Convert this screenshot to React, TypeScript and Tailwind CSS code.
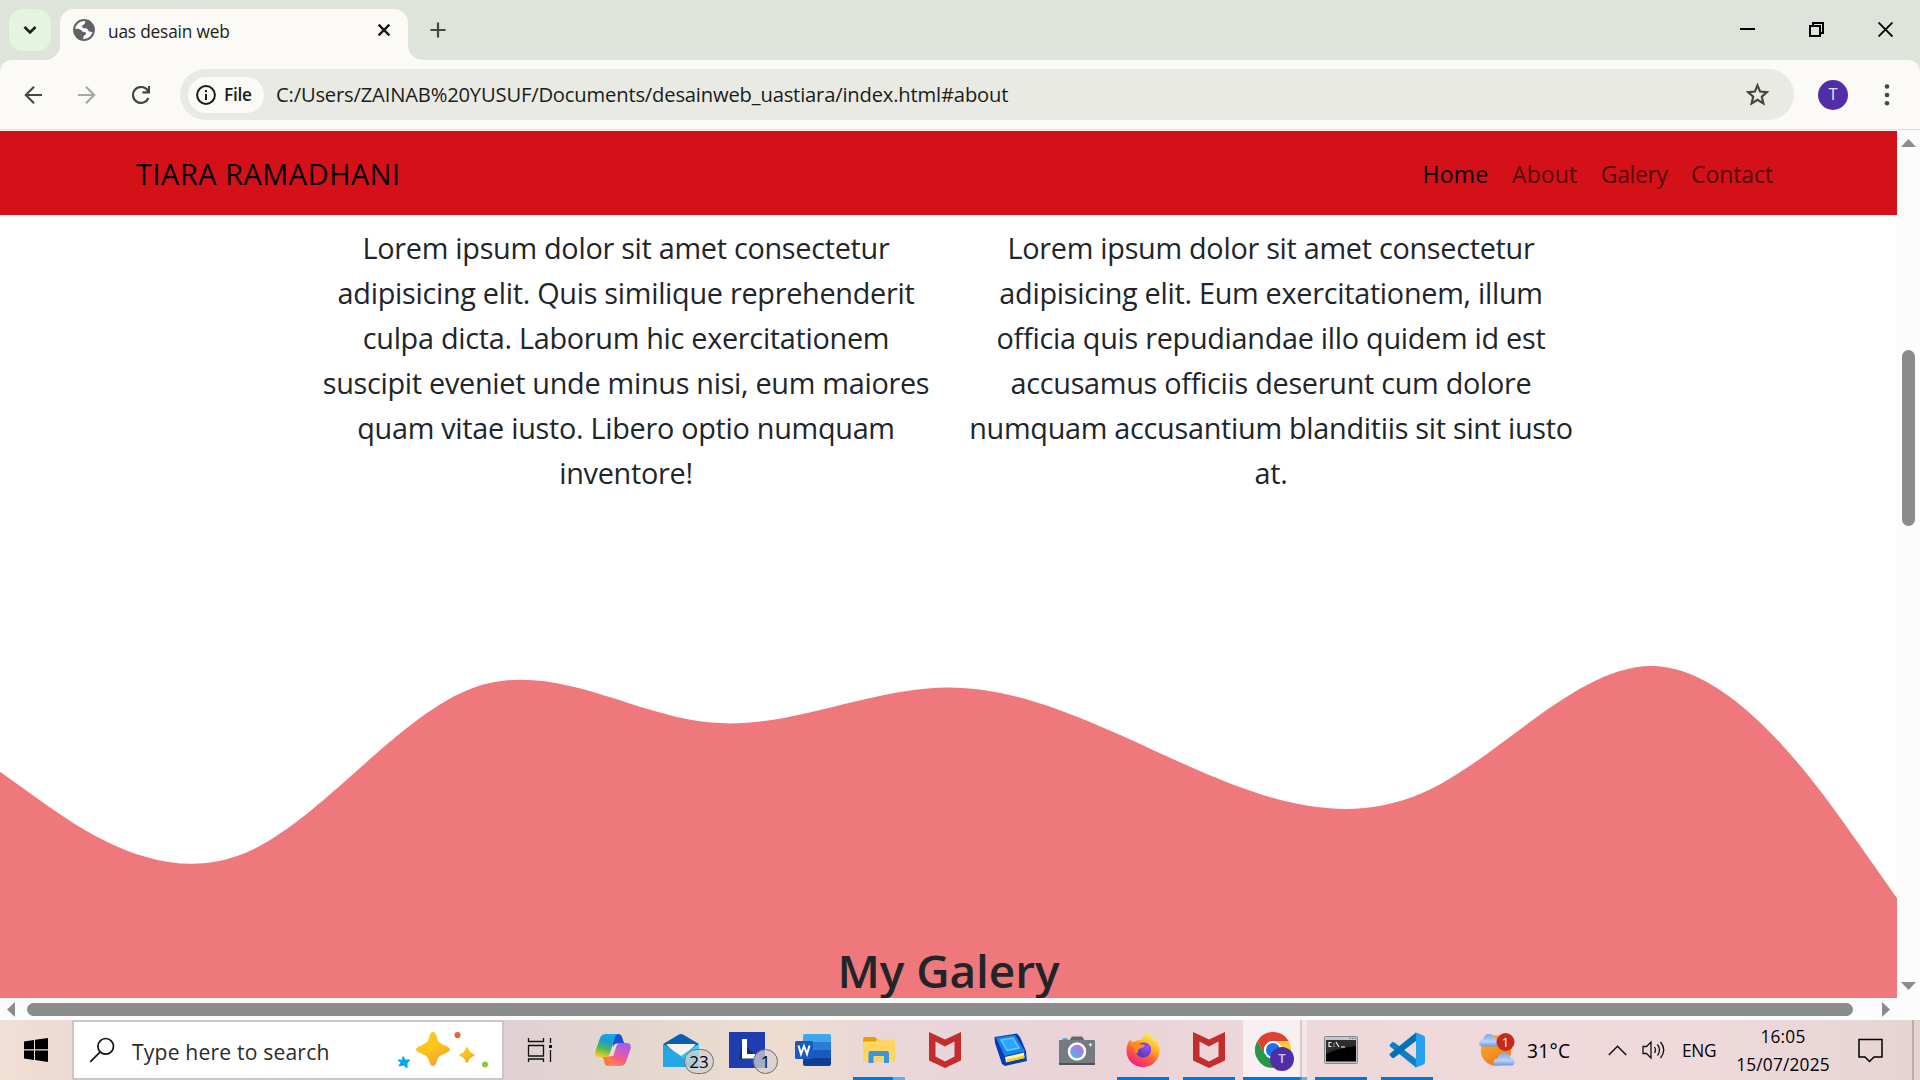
import type { ReactNode } from "react";

function GlobeIcon() {
  return (
    <svg className="size-[22px]" viewBox="0 0 22 22">
      <circle cx="11" cy="11" r="9.900" fill="#fbfaf6" stroke="#5f6368" strokeWidth="2" />
      <path d="M13 1 C11.500 3 12.500 4.500 11 5.500 C9 6 8.500 7.500 10 9 C12 9.500 13 8.500 14.500 10 C15 12.500 17 13 20.800 13 A10 10 0 0 0 13 1Z" fill="#5f6368" />
      <path d="M1.200 10 C4 9.500 7 10 8.500 11.500 C9.500 13.500 12 12.500 13 14 C13.500 16 11 16 10.500 17.500 C10.500 19 10 20 9.500 21 A10 10 0 0 1 1.200 10Z" fill="#5f6368" />
    </svg>
  );
}

function TabStrip() {
  return (
    <header className="flex h-[60px] items-end bg-[#dee4d9]">
      <button className="mb-[9px] ml-[9px] flex size-[42px] items-center justify-center rounded-[14px] bg-[#e6f3e1]">
        <svg className="size-[14px]" viewBox="0 0 14 14" fill="none" stroke="#1b1c19" strokeWidth="2.6">
          <path d="M1.5 4 L7 9.4 L12.5 4" />
        </svg>
      </button>
      <div className="relative ml-[9px] flex h-[51px] w-[348px] items-center rounded-t-[14px] bg-[#fbfaf6] pr-[17px] pb-[9px] pl-[13px]">
        <svg className="absolute bottom-0 -left-[15px] size-[15px]" viewBox="0 0 15 15" fill="#fbfaf6">
          <path d="M15 0 A15 15 0 0 1 0 15 H15Z" />
        </svg>
        <svg className="absolute -right-[15px] bottom-0 size-[15px]" viewBox="0 0 15 15" fill="#fbfaf6">
          <path d="M0 0 A15 15 0 0 0 15 15 H0Z" />
        </svg>
        <GlobeIcon />
        <span className="mt-[4px] ml-[13px] text-[17.3px] tracking-[-0.18px] text-[#1b1c19]">uas desain web</span>
        <svg className="ml-auto size-[14px]" viewBox="0 0 14 14" stroke="#1b1c19" strokeWidth="2.4">
          <path d="M1.6 1.6 L12.4 12.4 M12.4 1.6 L1.6 12.4" />
        </svg>
      </div>
      <svg className="mb-[22px] ml-[22px] size-4" viewBox="0 0 16 16" stroke="#434840" strokeWidth="2.2">
        <path d="M8 0.5 V15.5 M0.5 8 H15.5" />
      </svg>
      <div className="mb-[23px] ml-auto flex items-center gap-[54px] pr-[27px]">
        <svg className="size-[15px]" viewBox="0 0 15 15" fill="#000" shapeRendering="crispEdges">
          <rect x="0" y="6" width="15" height="2" />
        </svg>
        <svg className="size-[15px]" viewBox="0 0 15 15" fill="none" stroke="#000" strokeWidth="2" shapeRendering="crispEdges">
          <path d="M1 4 H11 V14 H1Z M4 4 V1 H14 V11 H11" />
        </svg>
        <svg className="size-[15px]" viewBox="0 0 15 15" stroke="#000" strokeWidth="1.9">
          <path d="M0.5 0.5 L14.5 14.5 M14.5 0.5 L0.5 14.5" />
        </svg>
      </div>
    </header>
  );
}

function Toolbar() {
  return (
    <div className="h-[71px] bg-[#dee4d9]">
      <div className="flex h-[70px] items-center rounded-t-[12px] border-b border-[#dfe0db] bg-[#fbfaf6]">
        <svg className="ml-[24px] size-[18px]" viewBox="0 0 18 18" fill="none" stroke="#434840" strokeWidth="2.1">
          <path d="M18 9 H1.5 M10 0.8 L1.8 9 L10 17.2" />
        </svg>
        <svg className="ml-[36px] size-[18px]" viewBox="0 0 18 18" fill="none" stroke="#a5a7a1" strokeWidth="2.1">
          <path d="M0 9 H16.5 M8 0.8 L16.2 9 L8 17.2" />
        </svg>
        <svg className="ml-[36px] size-[18px]" viewBox="0 0 18 18" fill="none" stroke="#434840" strokeWidth="2.2">
          <path d="M16.4 12 A8 8 0 1 1 15 3.6 L16.6 5.4 M17 0 V6.4 H10.4" />
        </svg>
        <div className="ml-[30px] flex h-[51px] w-[1614px] items-center rounded-full bg-[#e8eae3] pr-[25px] pl-[8px]">
          <div className="flex h-[36px] w-[76px] items-center rounded-full bg-[#fbfaf6] pl-[8px]">
            <svg className="size-5" viewBox="0 0 20 20" fill="none" stroke="#1b1c19" strokeWidth="2">
              <circle cx="10" cy="10" r="8.9" />
              <path d="M10 9 V15 M10 5 V7.2" />
            </svg>
            <span className="ml-[8px] text-[17.3px] font-semibold tracking-[-0.28px] text-[#1b1c19]">File</span>
          </div>
          <span className="ml-[12px] text-[20.2px] tracking-[-0.18px] text-[#1b1c19]">
            C:/Users/ZAINAB%20YUSUF/Documents/desainweb_uastiara/index.html#about
          </span>
          <svg className="ml-auto size-[23px]" viewBox="0 0 22 22" fill="none" stroke="#434840" strokeWidth="2.1">
            <path d="M11 2.2 L13.5 8.2 L20 8.8 L15.1 13 L16.6 19.5 L11 16 L5.4 19.5 L6.9 13 L2 8.8 L8.5 8.2Z" />
          </svg>
        </div>
        <div className="ml-[24px] flex size-[30px] items-center justify-center rounded-full bg-[#512da8] font-[Roboto] text-[16px] text-[#e4dcf5]">
          T
        </div>
        <svg className="ml-[36px] h-[24px] w-[6px]" viewBox="0 0 6 24" fill="#434840">
          <circle cx="3" cy="3.5" r="2.3" />
          <circle cx="3" cy="12" r="2.3" />
          <circle cx="3" cy="20.3" r="2.3" />
        </svg>
      </div>
      <div className="h-px bg-[#f7f7f5]" />
    </div>
  );
}

function SiteNav() {
  return (
    <nav className="flex h-[84px] items-center justify-between bg-[#d41119] pr-[124px] pl-[136px]">
      <a className="pt-[2px] text-[28.8px] tracking-[0.6px] text-black">TIARA RAMADHANI</a>
      <div className="flex gap-[23.5px] pt-[3px] text-[23px] text-[#550709]">
        <a className="tracking-[0.28px] text-black">Home</a>
        <a className="tracking-[0.1px]">About</a>
        <a className="tracking-[-0.4px]">Galery</a>
        <a className="tracking-[-0.1px]">Contact</a>
      </div>
    </nav>
  );
}

function About() {
  return (
    <section className="grid h-[346px] grid-cols-[645px_645px] justify-center pt-[10px] text-center text-[28.8px] leading-[45px] tracking-[-0.28px] whitespace-nowrap text-[#212529]">
      <p>
        Lorem ipsum dolor sit amet consectetur
        <br />
        adipisicing elit. Quis similique reprehenderit
        <br />
        culpa dicta. Laborum hic exercitationem
        <br />
        suscipit eveniet unde minus nisi, eum maiores
        <br />
        quam vitae iusto. Libero optio numquam
        <br />
        inventore!
      </p>
      <p>
        Lorem ipsum dolor sit amet consectetur
        <br />
        adipisicing elit. Eum exercitationem, illum
        <br />
        officia quis repudiandae illo quidem id est
        <br />
        accusamus officiis deserunt cum dolore
        <br />
        numquam accusantium blanditiis sit sint iusto
        <br />
        at.
      </p>
    </section>
  );
}

/* Control heights of the wave; consecutive ones are 180 units apart. */
const WAVE = [160, 288, 32, 160, 64, 160, 224, 0, 256];

function wavePath() {
  const step = 180;
  let d = `M0 ${WAVE[0]} L${step / 6} ${(5 * WAVE[0] + WAVE[1]) / 6}`;
  for (let i = 1; i < WAVE.length; i++) {
    const a = WAVE[i - 1];
    const b = WAVE[i];
    const c = WAVE[i + 1] ?? b;
    const last = i === WAVE.length - 1;
    const endX = last ? (i - 1 / 6) * step : i * step;
    const endY = last ? (a + 5 * b) / 6 : (a + 4 * b + c) / 6;
    d += ` C${(i - 2 / 3) * step} ${(2 * a + b) / 3} ${(i - 1 / 3) * step} ${(a + 2 * b) / 3} ${endX} ${endY}`;
  }
  return `${d} L1440 ${WAVE[WAVE.length - 1]} V320 H0Z`;
}

function Page() {
  return (
    <main className="h-[867px] w-[1897px] overflow-hidden bg-white">
      <SiteNav />
      <About />
      <svg className="block h-[421.6px] w-[1897px]" viewBox="0 0 1440 320" fill="#ee787b">
        <path d={wavePath()} />
      </svg>
      <section className="-mt-[41px] h-[120px] bg-[#ee787b] text-center">
        <h2 className="text-[46px] leading-[57.6px] font-semibold tracking-[-0.1px] text-[#212529]">My Galery</h2>
      </section>
    </main>
  );
}

function VerticalScrollbar() {
  return (
    <div className="flex h-[867px] w-[23px] flex-col items-center bg-[#fcfcfc] pt-[8px]">
      <svg className="h-[8px] w-[15px]" viewBox="0 0 15 8" fill="#8b8b8b">
        <path d="M0 8 L7.5 0 L15 8Z" />
      </svg>
      <div className="mt-[203px] h-[176px] w-[13px] rounded-full bg-[#8b8b8b]" />
      <svg className="mt-[456px] h-[8px] w-[15px]" viewBox="0 0 15 8" fill="#8b8b8b">
        <path d="M0 0 L7.5 8 L15 0Z" />
      </svg>
    </div>
  );
}

function HorizontalScrollbar() {
  return (
    <div className="flex h-[22px] items-center bg-[#fcfcfc] pl-[7px]">
      <svg className="h-[15px] w-[8px]" viewBox="0 0 8 15" fill="#8b8b8b">
        <path d="M8 0 L0 7.5 L8 15Z" />
      </svg>
      <div className="ml-[12px] h-[13px] w-[1826px] rounded-full bg-[#8b8b8b]" />
      <svg className="ml-[29px] h-[15px] w-[8px]" viewBox="0 0 8 15" fill="#8b8b8b">
        <path d="M0 0 L8 7.5 L0 15Z" />
      </svg>
    </div>
  );
}

function Slot({ children, open = false }: { children: ReactNode; open?: boolean }) {
  return (
    <div className="flex h-[60px] w-[66px] flex-col items-center">
      <div className="flex h-[57px] items-center pt-[3px]">{children}</div>
      {open && <div className="h-[3px] w-[52px] bg-[#0078d7]" />}
    </div>
  );
}

function Search() {
  return (
    <div className="flex h-[60px] w-[432px] items-center border-2 border-[#c8c8c8] bg-white pl-[15px]">
      <svg className="size-[26px]" viewBox="0 0 26 26" fill="none" stroke="#111" strokeWidth="1.7">
        <circle cx="16.7" cy="9.3" r="7.8" />
        <path d="M11.2 14.8 L1.2 24.8" />
      </svg>
      <span className="mt-[3px] ml-[17px] text-[21.1px] tracking-[0.18px] text-[#2b2b2b]">Type here to search</span>
      <svg className="mr-[14px] ml-auto h-[40px] w-[92px]" viewBox="0 0 92 40">
        <defs>
          <linearGradient id="spark" x1="0" y1="0" x2="0.5" y2="1">
            <stop offset="0" stopColor="#ffc814" />
            <stop offset="0.55" stopColor="#fdc41c" />
            <stop offset="1" stopColor="#f0a52c" />
          </linearGradient>
        </defs>
        <path
          d="M37 2 Q39.5 2 40.5 6 C42 12 43 13 49 15.500 Q54 17.500 54 19.500 Q54 21.500 49 23.500 C43 26 42 27 40.500 32 Q39.500 36 37 36 Q34.500 36 33.500 32 C32 27 31 26 25 23.500 Q20 21.500 20 19.500 Q20 17.500 25 15.500 C31 13 32 12 33.500 6 Q34.500 2 37 2Z"
          fill="url(#spark)"
        />
        <path
          d="M71 17 Q72 17 73 20 Q73.800 22.300 76.500 23.500 Q79 24.500 79 25 Q79 25.800 76.500 26.700 Q73.800 27.900 73 30 Q72 33 71 33 Q70 33 69 30 Q68.200 27.900 65.500 26.700 Q63 25.800 63 25 Q63 24.500 65.500 23.500 Q68.200 22.300 69 20 Q70 17 71 17Z"
          fill="url(#spark)"
        />
        <path
          d="M7 26.500 L9 30 L14 30 L11 33 L11 38 L7.500 35 L3 36 L5 32.500 L2 30 L6.500 30.200Z"
          fill="#00a8f0"
          stroke="#00a8f0"
          strokeLinejoin="round"
        />
        <circle cx="61.500" cy="5" r="3.100" fill="#f2652a" />
        <circle cx="89" cy="34.500" r="3" fill="#8ac640" />
      </svg>
    </div>
  );
}

function TaskViewIcon() {
  return (
    <svg className="size-[26px]" viewBox="0 0 26 26" fill="none" stroke="#111" strokeWidth="1.300">
      <path d="M1.500 1 V4.500 H16.500 V1 M1.500 8.500 H16.500 V19 H1.500Z M1.500 25 V22 H16.500 V25 M23.500 1 V6 M23.500 13 V25" />
      <rect x="22" y="8" width="3" height="3" fill="#111" stroke="none" />
    </svg>
  );
}

function CopilotIcon() {
  return (
    <svg className="size-[36px]" viewBox="0 0 36 36">
      <defs>
        <linearGradient id="copL" x1="0.600" y1="0" x2="0.300" y2="1">
          <stop offset="0" stopColor="#12a6ee" />
          <stop offset="0.350" stopColor="#1f9cc8" />
          <stop offset="0.650" stopColor="#52b857" />
          <stop offset="1" stopColor="#f4cc1c" />
        </linearGradient>
        <linearGradient id="copR" x1="0.700" y1="0" x2="0.300" y2="1">
          <stop offset="0" stopColor="#a35bf0" />
          <stop offset="0.400" stopColor="#d55bc0" />
          <stop offset="0.700" stopColor="#f8607c" />
          <stop offset="1" stopColor="#fb8a55" />
        </linearGradient>
      </defs>
      <path d="M16 2 H23 Q26 2 27 5 L28.500 9.500 Q29 11.500 32 11.500 H22 Q19 11.500 18 15Z" fill="#1a4fd6" />
      <path d="M20 34 H13 Q10.500 34 9.500 31 L8.500 27 Q8 24.500 4 24.500 H14 Q17 24.500 18 21Z" fill="#fb7a3c" />
      <path d="M11 2 H24 Q21 2 20 5.500 L15 21 Q14 25 10 25 H4.500 Q-1 25 0.500 19 L5 6 Q6.500 2 11 2Z" fill="url(#copL)" />
      <path d="M26 11 H31.500 Q37 11 35.500 17 L31 30 Q29.500 34 25 34 H11.500 Q14.500 34 15.500 30.500 L21 15 Q22 11 26 11Z" fill="url(#copR)" />
      <path d="M20 12 H23 Q21.500 13 21 15 L18.300 24 H14 Q15 22 15.500 20Z" fill="#e6dbd6" />
    </svg>
  );
}

function Count({ text, className }: { text: string; className: string }) {
  return (
    <span
      className={`absolute flex h-[25px] items-center justify-center rounded-full border border-[#6f6f6f] bg-[#d3d0d0]/75 text-[17px] font-medium text-black ${className}`}
    >
      {text}
    </span>
  );
}

function MailIcon() {
  return (
    <div className="relative">
      <svg className="h-[36px] w-[36px]" viewBox="0 0 36 36">
        <path d="M0 12 L16 2.500 Q18 1.300 20 2.500 L36 12 L18 25Z" fill="#0b5fae" />
        <path d="M3 12.500 H33 L18 26Z" fill="#f4f3f2" />
        <path d="M0 12 L18 24 L36 12 V35 H0Z" fill="#26a6e4" />
        <path d="M36 12 V35 H33 L11 19.500 L18 24Z" fill="#3cc8f4" />
        <path d="M4 12 H32 L18 23.500Z" fill="#f4f3f2" />
      </svg>
      <Count text="23" className="-right-[15px] -bottom-[6px] w-[30px]" />
    </div>
  );
}

function LIcon() {
  return (
    <div className="relative">
      <svg className="size-[36px]" viewBox="0 0 36 36">
        <rect width="36" height="36" fill="#1f3db0" />
        <path d="M13 10 L10 27 H24 L25 22Z" fill="#0c3556" />
        <path d="M13 7 H18 V22 H26 V26.500 H13Z" fill="#fff" />
      </svg>
      <Count text="1" className="-right-[13px] -bottom-[6px] w-[25px]" />
    </div>
  );
}

function WordIcon() {
  return (
    <svg className="size-[36px]" viewBox="0 0 36 36">
      <path d="M10 2 H34 Q36 2 36 4 V10 H8 V4 Q8 2 10 2Z" fill="#41a5ee" />
      <rect x="8" y="10" width="28" height="8" fill="#2b7cd3" />
      <rect x="8" y="18" width="28" height="8" fill="#185abd" />
      <path d="M8 26 H36 V32 Q36 34 34 34 H10 Q8 34 8 32Z" fill="#103f91" />
      <rect x="0" y="9" width="18" height="18" rx="1.500" fill="#185abd" />
      <path d="M3.500 13.500 L6 22 L9 14 L12 22 L14.500 13.500" fill="none" stroke="#fff" strokeWidth="2" />
    </svg>
  );
}

function ExplorerIcon() {
  return (
    <svg className="size-[34px]" viewBox="0 0 34 34">
      <path d="M1 6 Q1 4 3 4 H13 L16.500 7.500 V10 H1Z" fill="#e2a100" />
      <path d="M1 8.500 H13 L16 6.500 H31 Q33 6.500 33 8.500 V27 Q33 29 31 29 H3 Q1 29 1 27Z" fill="#ffd45f" />
      <path d="M6.500 30 V20 Q6.500 18 8.500 18 H25 Q27 18 27 20 V30 H22 V23 H11.500 V30Z" fill="#3796dc" />
    </svg>
  );
}

function McAfeeIcon() {
  return (
    <svg className="h-[36px] w-[32px]" viewBox="0 0 32 36">
      <path
        fillRule="evenodd"
        d="M0 0 L16 7.500 L32 0 V28.500 L16 36 L0 28.500Z M6.500 9.500 V24.500 L16 29.500 L25.500 24.500 V9.500 L16 14.500Z"
        fill="#c22d2d"
      />
    </svg>
  );
}

function BookIcon() {
  return (
    <svg className="size-[36px]" viewBox="0 0 36 36">
      <path d="M1.500 5 L24 1.500 L27 5 L33 19 L33.500 25 L34 29 L12 34 L9 32 L2 11Z" fill="#0b3cae" />
      <path d="M12 25 L31 20.500 L31.500 26 L13 30.500Z" fill="#fff2a8" />
      <path d="M14 27.500 L31 23.500 L31.500 26 L14 30Z" fill="#f2d21c" />
      <path d="M3 5.500 L22 3 L32 19.500 L11.500 24Z" fill="#1585ea" />
      <path d="M8 8 L20 6 L26 16 L14 18.500Z" fill="#2ba6fa" stroke="#67c8ff" strokeWidth="1.500" strokeLinejoin="round" />
    </svg>
  );
}

function CameraIcon() {
  return (
    <svg className="size-[36px]" viewBox="0 0 36 36">
      <defs>
        <linearGradient id="lens" x1="0.800" y1="0" x2="0.200" y2="1">
          <stop offset="0.200" stopColor="#b07ae0" />
          <stop offset="1" stopColor="#48b8ee" />
        </linearGradient>
      </defs>
      <path d="M3 9 V8 Q3 6 5.500 6 Q9 6 9 8 V9Z" fill="#35aae6" />
      <path d="M10 9 L13 4.500 H23 L26 9Z" fill="#62686d" />
      <rect x="0" y="8" width="36" height="25" rx="1" fill="#757b80" />
      <rect x="0" y="31" width="36" height="2" fill="#4e5256" />
      <circle cx="18" cy="19.500" r="9.300" fill="#fff" />
      <circle cx="18" cy="19.500" r="6.800" fill="url(#lens)" />
      <path d="M31.500 11 V14.400 M29.800 12.700 H33.200" stroke="#e8e8e8" strokeWidth="1.200" />
    </svg>
  );
}

function FirefoxIcon() {
  return (
    <svg className="size-[36px]" viewBox="0 0 36 36">
      <defs>
        <linearGradient id="fox" x1="0.800" y1="0" x2="0.250" y2="1">
          <stop offset="0.050" stopColor="#fff04a" />
          <stop offset="0.350" stopColor="#ffb52a" />
          <stop offset="0.620" stopColor="#ff6038" />
          <stop offset="1" stopColor="#f4178c" />
        </linearGradient>
        <radialGradient id="foxCore" cx="0.700" cy="0.300" r="0.800">
          <stop offset="0" stopColor="#9550f5" />
          <stop offset="1" stopColor="#5336b8" />
        </radialGradient>
      </defs>
      <path
        d="M22 0.500 C26 3 28 6 28.500 9 L31 8 C34 12 35 16 34.500 20 C33.500 29 26.500 35 18 35 C8.500 35 1.500 28 1.500 19 C1.500 14 3 10 5.500 7 L6.500 10.500 Q8 9.500 10.500 9.500 Q12 7.500 17 7.500 Q18.500 3 22 0.500Z"
        fill="url(#fox)"
      />
      <path d="M12 13.500 C15 9.500 24 9 26 16 C26.500 22 22.500 25.500 18 25.500 C13.500 25.500 11 22 11 18Z" fill="url(#foxCore)" />
      <path d="M4.500 12 Q8 9 12 10 Q13.500 12 20 13 Q19 16 15 16.500 Q12.500 17 13 21 Q8 20 8 15Z" fill="#ff8a22" />
    </svg>
  );
}

function ChromeIcon() {
  return (
    <div className="relative mr-[5px] h-[36px] w-[36px]">
      <svg className="size-[36px]" viewBox="0 0 36 36">
        <path d="M18 18 V9 H33.600 A18 18 0 0 1 18 36Z" fill="#fcc934" />
        <path d="M2.400 9 L10.200 22.500 L18 27 V36 A18 18 0 0 1 2.400 9Z" fill="#279648" />
        <path d="M18 36 L25.800 22.500 L18 18 L10.200 22.500 Q13 27 18 27Z" fill="#279648" />
        <path d="M2.400 9 L10.200 22.500 A9 9 0 0 1 18 9 H33.600 A18 18 0 0 0 2.400 9Z" fill="#e0402f" />
        <circle cx="18" cy="18" r="9" fill="#fff" />
        <circle cx="18" cy="18" r="7" fill="#1a73e8" />
      </svg>
      <span className="absolute top-[15px] left-[15px] flex size-[24px] items-center justify-center rounded-full bg-[#512da8] text-[13px] font-semibold text-[#d3c5ee]">
        T
      </span>
    </div>
  );
}

function TerminalIcon() {
  return (
    <svg className="h-[28px] w-[34px]" viewBox="0 0 34 28">
      <rect x="0.500" y="0.500" width="33" height="27" rx="1" fill="#c3c8cc" stroke="#84898e" />
      <rect x="2" y="4" width="30" height="21.500" fill="#000" />
      <path d="M2 4 H32 V10 Q14 12 2 18Z" fill="#2e2e2e" />
      <path d="M7.500 6.500 H5 V10.500 H7.500 M10 7.500 V8.500 M10 9.800 V10.800 M12 6 L15 11 M17 11 H21" stroke="#eee" strokeWidth="1.200" fill="none" />
      <path d="M25 2.200 H26.500 M28 2.200 H29.500 M31 2.200 H32" stroke="#54606a" />
    </svg>
  );
}

function CodeIcon() {
  return (
    <svg className="size-[36px]" viewBox="0 0 36 36">
      <path d="M1 12.500 L3 10.300 Q4 9.500 5.500 10.500 L27 27 V35.500 L1 14.500 Q0 13.500 1 12.500Z" fill="#0f7fc6" />
      <path d="M1 23.500 L3 25.700 Q4 26.500 5.500 25.500 L27 9 V0.500 L1 21.500 Q0 22.500 1 23.500Z" fill="#0073b7" />
      <path d="M26 0 L34.500 3.500 Q36 4.300 36 6 V30 Q36 31.700 34.500 32.500 L26 36 Q27 35 27 33.500 V2.500 Q27 1 26 0Z" fill="#24a2f0" />
    </svg>
  );
}

function WeatherIcon() {
  return (
    <svg className="h-[36px] w-[38px]" viewBox="0 0 38 36">
      <defs>
        <linearGradient id="sun" x1="0" y1="0" x2="0.500" y2="1">
          <stop offset="0" stopColor="#f0b92a" />
          <stop offset="1" stopColor="#f27b1c" />
        </linearGradient>
        <linearGradient id="cloud" x1="0" y1="0" x2="0" y2="1">
          <stop offset="0" stopColor="#7ba6e6" />
          <stop offset="0.600" stopColor="#bcd2f4" />
          <stop offset="1" stopColor="#6f98dc" />
        </linearGradient>
      </defs>
      <circle cx="18" cy="18.500" r="15.200" fill="url(#sun)" />
      <path d="M5 14.500 Q1 14.500 1 11 Q1 8 5 7.500 Q6 2 11 2 Q16 2 17 6.500 Q22 7 22 11 Q22 14.500 18 14.500Z" fill="url(#cloud)" />
      <path d="M19 33.500 Q15.500 33.500 15.500 30 Q15.500 27 19.500 26.500 Q21 20.500 26 20.500 Q31 20.500 32 25.500 Q36.500 26 36.500 30 Q36.500 33.500 33 33.500Z" fill="url(#cloud)" />
      <circle cx="27.500" cy="10" r="9" fill="#c42b1c" />
      <text x="27.500" y="14.600" textAnchor="middle" fontSize="13" fill="#fff">
        1
      </text>
    </svg>
  );
}

function Taskbar() {
  return (
    <footer className="flex h-[60px] bg-[linear-gradient(90deg,#f1e0d4_0px,#eddad4_70px,#dfd1d4_510px,#e4d7cf_640px,#eeddd0_780px,#ead6d8_880px,#e9d3d8_1100px,#eed8da_1300px,#efd9db_1700px,#e6d4d3_1920px)]">
      <div className="flex w-[72px] items-center justify-center">
        <svg className="size-[24px]" viewBox="0 0 24 24" fill="#000">
          <path d="M0 3.400 L10 2 V11.300 H0Z M11 1.800 L24 0 V11.300 H11Z M0 12.400 H10 V21.900 L0 20.500Z M11 12.400 H24 V24 L11 22.100Z" />
        </svg>
      </div>
      <Search />
      <div className="ml-[3px] flex">
        <Slot><TaskViewIcon /></Slot>
        <div className="w-[7px]" />
        <Slot><CopilotIcon /></Slot>
        <div className="w-[2px]" />
        <Slot><MailIcon /></Slot>
        <Slot><LIcon /></Slot>
        <Slot><WordIcon /></Slot>
        <div className="flex w-[66px] flex-col items-center">
          <div className="flex h-[57px] items-center pt-[3px]"><ExplorerIcon /></div>
          <div className="flex h-[3px] w-[52px]">
            <div className="w-[40px] bg-[#0078d7]" />
            <div className="w-[12px] bg-[#66aee7]" />
          </div>
        </div>
        <Slot><McAfeeIcon /></Slot>
        <Slot><BookIcon /></Slot>
        <Slot><CameraIcon /></Slot>
        <Slot open><FirefoxIcon /></Slot>
        <Slot open><McAfeeIcon /></Slot>
        <div className="flex h-[60px] w-[66px]">
          <div className="ml-px flex w-[57px] flex-col items-center bg-[#f8eff0]">
            <div className="flex h-[57px] items-center pt-[3px] pl-[8px]"><ChromeIcon /></div>
            <div className="h-[3px] w-full bg-[#0078d7]" />
          </div>
          <div className="flex w-[2px] flex-col justify-end bg-[#d8c6c9]">
            <div className="h-[3px] bg-[#4a86b8]" />
          </div>
          <div className="flex w-[5px] flex-col justify-end bg-[#f5e6e8]">
            <div className="h-[3px] bg-[#66aee7]" />
          </div>
        </div>
        <Slot open><TerminalIcon /></Slot>
        <Slot open><CodeIcon /></Slot>
      </div>
      <div className="ml-auto flex items-center text-black">
        <WeatherIcon />
        <span className="mt-[3px] ml-[11px] w-[44px] text-[19.200px] tracking-[0.250px] whitespace-nowrap">31°C</span>
        <svg className="ml-[37px] h-[11px] w-[19px]" viewBox="0 0 19 11" fill="none" stroke="#111" strokeWidth="1.500">
          <path d="M0.800 10 L9.500 1.300 L18.200 10" />
        </svg>
        <svg className="ml-[15px] h-[20px] w-[24px]" viewBox="0 0 24 20" fill="none" stroke="#111" strokeWidth="1.300">
          <path d="M1 6.500 H4.500 L9 2 V18 L4.500 13.500 H1Z M12.500 7 Q14.500 10 12.500 13 M15.500 4.500 Q19.500 10 15.500 15.500 M18.500 2 Q25 10 18.500 18" />
        </svg>
        <span className="mt-[2px] ml-[16px] w-[36px] text-[17.300px] tracking-[-0.300px]">ENG</span>
        <div className="mt-[2px] ml-[18px] w-[94px] text-center text-[17.300px] leading-[28px] tracking-[0.200px] whitespace-nowrap">
          <div>16:05</div>
          <div>15/07/2025</div>
        </div>
        <svg className="ml-[28px] size-[25px]" viewBox="0 0 25 25" fill="none" stroke="#000" strokeWidth="1.500">
          <path d="M1 1.500 H24 V19 H16 L11.500 23.500 L7 19 H1Z" />
        </svg>
        <div className="mr-[6px] ml-[29px] h-[60px] w-[2px] bg-[#b9adae]" />
      </div>
    </footer>
  );
}

export default function App() {
  return (
    <div className="flex h-[1080px] w-[1920px] flex-col overflow-hidden font-['Open_Sans','Noto_Sans',sans-serif]">
      <TabStrip />
      <Toolbar />
      <div className="flex bg-[#fcfcfc]">
        <Page />
        <VerticalScrollbar />
      </div>
      <HorizontalScrollbar />
      <Taskbar />
    </div>
  );
}
